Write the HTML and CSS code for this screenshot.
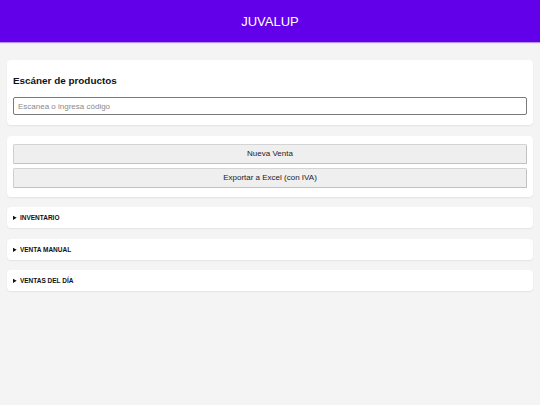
FILE: index.html
```html
<!DOCTYPE html>
<html lang="es">
<head>
<meta charset="utf-8">
<title>JUVALUP</title>
<link rel="stylesheet" href="styles.css">
</head>
<body>
<header class="topbar">JUVALUP</header>
<main class="main">
  <section class="card card-scan">
    <h2 class="card-title">Escáner de productos</h2>
    <input class="scan-input" type="text" placeholder="Escanea o ingresa código">
  </section>
  <section class="card card-actions">
    <button class="btn" type="button">Nueva Venta</button>
    <button class="btn" type="button">Exportar a Excel (con IVA)</button>
  </section>
  <details class="card panel"><summary class="panel-head">INVENTARIO</summary></details>
  <details class="card panel"><summary class="panel-head">VENTA MANUAL</summary></details>
  <details class="card panel"><summary class="panel-head">VENTAS DEL DÍA</summary></details>
</main>
</body>
</html>
```
FILE: styles.css
```css
html, body {
  margin: 0;
  padding: 0;
}
body {
  background: #f4f4f4;
  font-family: "Liberation Sans", Arial, sans-serif;
  color: #111;
  width: 540px;
  height: 405px;
  overflow: hidden;
}
.topbar {
  height: 42px;
  background: #6200ea;
  color: #fff;
  font-size: 13px;
  display: flex;
  align-items: center;
  justify-content: center;
  box-shadow: 0 1px 1px rgba(98, 0, 234, 0.4);
}
.main {
  padding: 18px 7px 0;
  display: flex;
  flex-direction: column;
  gap: 10.5px;
}
.card {
  background: #fff;
  border-radius: 4px;
  box-shadow: 0 1px 2px rgba(0, 0, 0, 0.07);
}
.card-scan {
  padding: 7.5px 6px 10px;
}
.card-title {
  margin: 7.75px 0 9.6px;
  font-size: 9.9px;
  line-height: 12px;
  font-weight: bold;
}
.scan-input {
  display: block;
  box-sizing: border-box;
  width: 100%;
  height: 18.5px;
  margin: 0;
  padding: 0 4px;
  border: 1.5px solid #7a7a7a;
  border-radius: 2px;
  font-family: "Liberation Sans", Arial, sans-serif;
  font-size: 8px;
  color: #111;
  background: #fff;
  outline: none;
}
.scan-input::placeholder {
  color: #8a8a8a;
}
.card-actions {
  padding: 8px 6px 9px;
  display: flex;
  flex-direction: column;
  gap: 4.3px;
}
.btn {
  display: block;
  box-sizing: border-box;
  width: 100%;
  height: 19.7px;
  margin: 0;
  padding: 0;
  background: #efefef;
  border: 1.2px solid #c2c2c2;
  border-top-color: #d4d4d4;
  border-left-color: #cfcfcf;
  border-radius: 1.5px;
  font-family: "Liberation Sans", Arial, sans-serif;
  font-size: 8px;
  color: #222;
}
.panel {
  padding: 0;
}
.panel-head {
  padding: 7px 6px;
  line-height: 7px;
  font-size: 6.5px;
  font-weight: bold;
  color: #111;
  cursor: pointer;
}
```
